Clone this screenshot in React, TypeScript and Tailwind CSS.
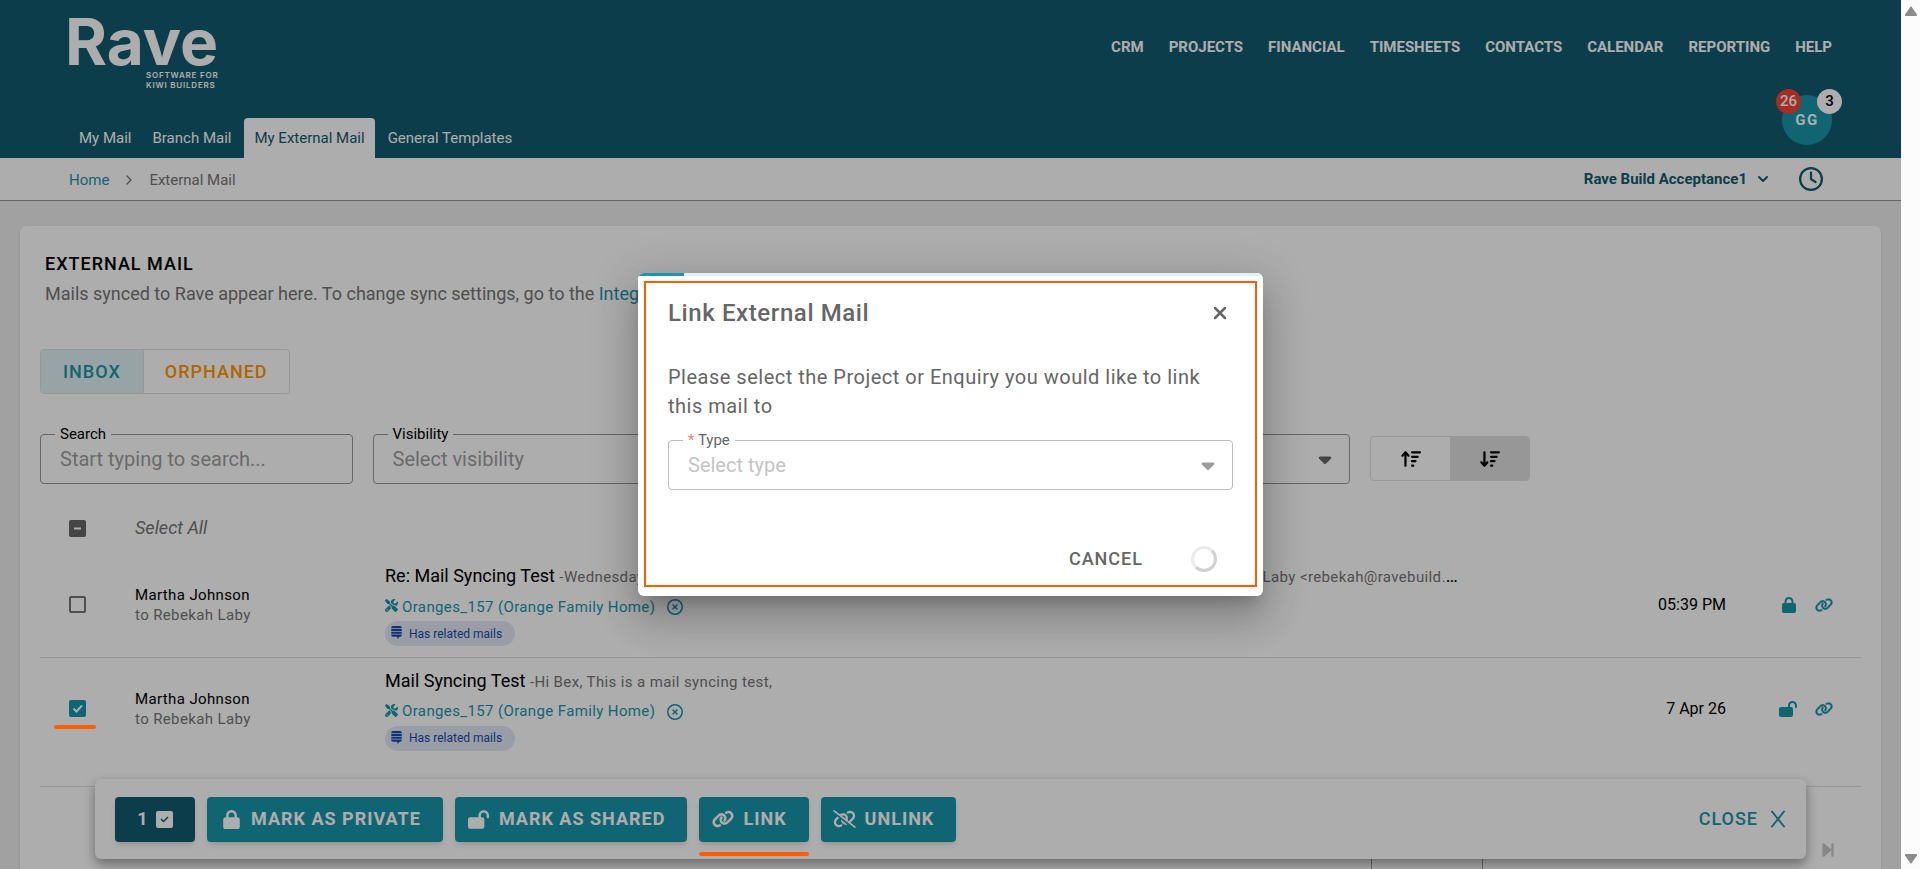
import { useState } from "react";
import type { ReactNode } from "react";
import clsx from "clsx";
import { ChevronDown, ChevronRight, X } from "lucide-react";
import { FaStackExchange } from "react-icons/fa";
import {
  FaArrowDownWideShort,
  FaArrowUpWideShort,
  FaCaretDown,
  FaForwardStep,
  FaLink,
  FaLinkSlash,
  FaLock,
  FaLockOpen,
  FaRegCircleXmark,
  FaRegClock,
  FaScrewdriverWrench,
} from "react-icons/fa6";

interface Mail {
  id: number;
  from: string;
  to: string;
  subject: string;
  preview: string;
  project: string;
  date: string;
  locked: boolean;
}

const MODULES = ["CRM", "PROJECTS", "FINANCIAL", "TIMESHEETS", "CONTACTS", "CALENDAR", "REPORTING", "HELP"];
const TABS = ["My Mail", "Branch Mail", "My External Mail", "General Templates"];

const MAILS: Mail[] = [
  {
    id: 1,
    from: "Martha Johnson",
    to: "to Rebekah Laby",
    subject: "Re: Mail Syncing Test",
    preview: "-Wednesday, 8 April 2026 5:39 PM +1200 from Martha Johnson <martha@ravebuild.com> - Rebekah Laby <rebekah@ravebuild.com> wrote",
    project: "Oranges_157 (Orange Family Home)",
    date: "05:39 PM",
    locked: true,
  },
  {
    id: 2,
    from: "Martha Johnson",
    to: "to Rebekah Laby",
    subject: "Mail Syncing Test",
    preview: "-Hi Bex, This is a mail syncing test,",
    project: "Oranges_157 (Orange Family Home)",
    date: "7 Apr 26",
    locked: false,
  },
];

function Header() {
  return (
    <header className="flex h-[158px] justify-between bg-[#125a6e] pr-[60px] pl-[69px] text-white">
      <div className="flex flex-col justify-between">
        <a href="#" className="-ml-1 flex w-[156px] flex-col pt-[13px]" aria-label="Rave home">
          <span className="font-[Inter] text-[64px] leading-[57px] font-bold">Rave</span>
          <span className="pl-[81px] font-[Inter] text-[8px] leading-[10px] font-semibold tracking-widest whitespace-nowrap">
            SOFTWARE FOR
            <br />
            KIWI BUILDERS
          </span>
        </a>
        <nav className="flex gap-px">
          {TABS.map((tab) => (
            <a
              key={tab}
              href="#"
              className={clsx("flex h-10 items-center rounded-t px-[10px] text-[15px] whitespace-nowrap", tab === "My External Mail" && "mx-[2px] bg-white text-[#125a6e]")}
            >
              {tab}
            </a>
          ))}
        </nav>
      </div>
      <div className="flex flex-col items-end pt-[35px]">
        <nav className="flex gap-[25px] pr-[9px] text-[15px] leading-6 font-bold">
          {MODULES.map((name) => <a key={name} href="#">{name}</a>)}
        </nav>
        <button className="relative mt-9 mr-[9px] flex size-[50px] items-center justify-center rounded-full bg-[#1996a9] text-[15px] font-bold tracking-widest">
          GG
          <span className="absolute -top-[6px] -left-[6px] flex size-[25px] items-center justify-center rounded-full bg-[#f44336] font-medium tracking-normal">26</span>
          <span className="absolute -top-[6px] -right-[10px] flex size-[25px] items-center justify-center rounded-full bg-white font-medium tracking-normal text-black">3</span>
        </button>
      </div>
    </header>
  );
}

function Breadcrumbs() {
  return (
    <div className="flex h-[43px] items-center justify-between border-b border-[#979797] bg-white pr-[78px] pl-[69px]">
      <div className="flex items-center pt-[2px] text-[15px] text-[#757575]">
        <a href="#" className="text-[#1996a9]">Home</a>
        <ChevronRight className="mx-3 size-4" />
        <span>External Mail</span>
      </div>
      <div className="flex items-center text-[#125a6e]">
        <button className="flex items-center gap-2 text-[15px] font-bold">
          Rave Build Acceptance1
          <ChevronDown className="size-4" strokeWidth={3} />
        </button>
        <button className="ml-7" aria-label="Timesheet clock"><FaRegClock className="size-6" /></button>
      </div>
    </div>
  );
}

interface FieldProps {
  id: string;
  label: string;
  children: ReactNode;
  caret?: boolean;
  required?: boolean;
  muted?: boolean;
}

function Field({ id, label, children, caret, required, muted }: FieldProps) {
  return (
    <div className={clsx("relative h-[50px] flex-1 rounded border", muted ? "border-[#bdbdbd]" : "border-[#979797]")}>
      <label htmlFor={id} className={clsx("absolute -top-[11px] left-[14px] bg-white px-[5px] text-[15px] leading-5", muted ? "text-[#666]" : "text-black")}>
        {required && <span className="text-[#f77]">* </span>}
        {label}
      </label>
      {children}
      {caret && <FaCaretDown className={clsx("pointer-events-none absolute top-[14px] right-[14px] size-5", muted ? "text-[#9b9b9b]" : "text-[#666]")} />}
    </div>
  );
}

const selectClass = "h-full w-full appearance-none bg-transparent px-[19px] text-[20px] outline-none";

function Filters() {
  return (
    <div className="mt-10 flex items-start gap-5">
      <div className="flex w-[1310px] gap-5">
        <Field id="search" label="Search">
          <input id="search" placeholder="Start typing to search..." className="h-full w-full bg-transparent px-[19px] text-[20px] outline-none placeholder:text-[#9e9e9e]" />
        </Field>
        <Field id="visibility" label="Visibility" caret>
          <select id="visibility" className={clsx(selectClass, "text-[#9e9e9e]")}><option>Select visibility</option></select>
        </Field>
        <Field id="status" label="Status" caret>
          <select id="status" className={clsx(selectClass, "text-[#9e9e9e]")}><option>Select status</option></select>
        </Field>
        <Field id="sort" label="Sort" caret>
          <select id="sort" className={selectClass}><option>Date</option></select>
        </Field>
      </div>
      <div className="mt-[2px] flex h-[45px] w-40 overflow-hidden rounded border border-[#dfdfdf]">
        <button className="flex flex-1 items-center justify-center" aria-label="Ascending"><FaArrowUpWideShort className="h-[18px] w-5" /></button>
        <button className="flex flex-1 items-center justify-center bg-[#dfdfdf]" aria-label="Descending"><FaArrowDownWideShort className="h-[18px] w-5" /></button>
      </div>
    </div>
  );
}

function CheckBox({ id, state, onChange, label }: { id: string; state: "on" | "off" | "mixed"; onChange?: () => void; label: string }) {
  return (
    <span className="relative flex size-[17px]">
      <input
        id={id}
        type="checkbox"
        aria-label={label}
        checked={state === "on"}
        onChange={onChange ?? (() => undefined)}
        className={clsx("size-full appearance-none rounded-[2px]", state === "off" && "border-2 border-[#757575]", state === "on" && "bg-[#1996a9]", state === "mixed" && "bg-[#666]")}
      />
      {state !== "off" && (
        <svg viewBox="0 0 17 17" className="pointer-events-none absolute inset-0 size-full" fill="none" stroke="#fff" strokeWidth="2">
          <path d={state === "on" ? "M4.500 8.500l3 3 5.500-6" : "M5 8.500h7"} />
        </svg>
      )}
    </span>
  );
}

function MailTable({ selected, onToggle }: { selected: number[]; onToggle: (id: number) => void }) {
  return (
    <table className="mt-[19px] w-full table-fixed text-left text-base">
      <colgroup>
        <col className="w-[95px]" />
        <col className="w-[250px]" />
        <col className="w-[1078px]" />
        <col />
        <col className="w-[135px]" />
      </colgroup>
      <thead>
        <tr className="h-[50px]">
          <th className="pl-[29px]"><CheckBox id="all" state="mixed" label="Select all mails" /></th>
          <th colSpan={4} className="text-lg font-normal text-[#757575] italic"><label htmlFor="all">Select All</label></th>
        </tr>
      </thead>
      <tbody>
        {MAILS.map((mail, index) => (
          <tr key={mail.id} className={clsx("border-b border-[#dfdfdf]", index === 0 ? "h-[104px]" : "h-[129px]")}>
            <td className={clsx("pl-[29px]", index > 0 && "pb-[26px]")}>
              <div className="relative flex">
                <CheckBox id={`mail-${mail.id}`} state={selected.includes(mail.id) ? "on" : "off"} onChange={() => onToggle(mail.id)} label={`Select ${mail.subject}`} />
                {selected.includes(mail.id) && <span className="absolute top-[25px] -left-[15px] z-20 h-1 w-[42px] rounded-full bg-[#ff5e00]" />}
              </div>
            </td>
            <td className={clsx("text-[15px] leading-5 tracking-wide", index > 0 && "pb-[25px]")}>
              <p>{mail.from}</p>
              <p className="text-[#757575]">{mail.to}</p>
            </td>
            <td className={clsx("align-top text-[15px]", index > 0 && "pb-[25px]")}>
              <p className="truncate pt-[11px] text-lg leading-6">
                {mail.subject} <span className="text-[15px] tracking-wide text-[#757575]">{mail.preview}</span>
              </p>
              <div className="mt-1 flex h-7 items-center text-[#1996a9]">
                <FaScrewdriverWrench className="mb-[3px] size-[13px]" />
                <a href="#" className="ml-1 tracking-wide">{mail.project}</a>
                <button className="ml-3" aria-label="Remove project"><FaRegCircleXmark className="size-4" /></button>
              </div>
              <span className="flex h-[25px] w-[130px] items-center gap-[6px] rounded-full bg-[#e0e8f5] pl-[5px] text-xs whitespace-nowrap text-[#1a4ba8]">
                <FaStackExchange className="mb-[2px] size-[13px]" />
                Has related mails
              </span>
            </td>
            <td className={clsx("text-right", index > 0 && "pb-[25px]")}>{mail.date}</td>
            <td className={clsx("text-[#1996a9]", index > 0 && "pb-[25px]")}>
              <div className="flex items-center justify-end gap-[18px] pr-7">
                {mail.locked ? <FaLock className="mr-px h-4 w-[14px]" /> : <FaLockOpen className="h-4 w-[18px]" />}
                <FaLink className="h-4 w-[18px]" strokeWidth={10} />
              </div>
            </td>
          </tr>
        ))}
      </tbody>
    </table>
  );
}

function ActionButton({ icon, children }: { icon: ReactNode; children: ReactNode }) {
  return (
    <button className="flex h-[45px] items-center gap-2 rounded bg-[#1996a9] pr-[22px] pl-3 text-lg font-bold tracking-[1px] whitespace-nowrap text-white shadow-md">
      <span className="flex w-6 justify-center">{icon}</span>
      {children}
    </button>
  );
}

function ActionBar({ count }: { count: number }) {
  return (
    <div className="absolute right-[95px] bottom-[10px] left-[95px] flex h-20 items-center gap-3 rounded-md bg-white px-5 text-lg shadow-[0_5px_12px_rgba(0,0,0,0.4)]">
      <button className="flex h-[45px] w-20 items-center justify-center gap-2 rounded bg-[#125a6e] font-bold text-white shadow-md">
        {count}
        <svg viewBox="0 0 17 17" className="size-[17px]">
          <rect width="17" height="17" rx="2" fill="#fff" />
          <path d="M5 8l2.500 2.500L12 6" fill="none" stroke="#125a6e" strokeWidth="1.500" />
        </svg>
      </button>
      <ActionButton icon={<FaLock className="h-[19px] w-[17px]" />}>MARK AS PRIVATE</ActionButton>
      <ActionButton icon={<FaLockOpen className="h-[19px] w-[21px]" />}>MARK AS SHARED</ActionButton>
      <div className="relative">
        <ActionButton icon={<FaLink className="h-[18px] w-[22px]" strokeWidth={10} />}>LINK</ActionButton>
        <span className="absolute top-[55px] left-0 z-20 h-1 w-full rounded-full bg-[#ff5e00]" />
      </div>
      <ActionButton icon={<FaLinkSlash className="h-[18px] w-[23px]" />}>UNLINK</ActionButton>
      <button className="ml-auto flex items-center gap-3 font-medium tracking-[1px] text-[#1996a9]">
        CLOSE
        <svg viewBox="0 0 16 18" className="h-[18px] w-4" fill="none" stroke="currentColor" strokeWidth="2" strokeLinecap="round" aria-hidden="true">
          <path d="M2 1.500l12 15M14 1.500L2 16.500" />
        </svg>
      </button>
    </div>
  );
}

function LinkDialog() {
  return (
    <div role="dialog" aria-labelledby="dialog-title" className="w-[625px] overflow-hidden rounded-md bg-white text-[#666] shadow-[0_11px_15px_-7px_rgba(0,0,0,0.2),0_24px_38px_3px_rgba(0,0,0,0.14),0_9px_46px_8px_rgba(0,0,0,0.12)]">
      <div className="h-[3px] bg-[#dff2f5]"><div className="h-full w-[46px] bg-[#1996a9]" /></div>
      <div className="mx-[6px] mt-[5px] mb-[9px] border-2 border-[#ff5e00] px-[22px] pb-1">
        <div className="flex items-center justify-between pt-[14px]">
          <h2 id="dialog-title" className="text-2xl leading-8 font-medium tracking-wide">Link External Mail</h2>
          <button aria-label="Close dialog" className="mr-[3px]"><X className="size-5" strokeWidth={3} /></button>
        </div>
        <p className="mt-[34px] text-[20px] leading-[29px] tracking-wide">Please select the Project or Enquiry you would like to link this mail to</p>
        <div className="mt-[19px] flex">
          <Field id="type" label="Type" caret required muted>
            <select id="type" className={clsx(selectClass, "text-[#c4c4c4]")}><option>Select type</option></select>
          </Field>
        </div>
        <div className="mt-[46px] flex h-[45px] items-center justify-end pr-4">
          <button className="text-lg font-medium tracking-[1px]">CANCEL</button>
          <span className="ml-12 size-[26px] rounded-full border-[3px] border-[#ececec] border-r-[#d0d0d0] border-b-[#d0d0d0]" role="status" aria-label="Loading" />
        </div>
      </div>
    </div>
  );
}

export default function App() {
  const [selected, setSelected] = useState<number[]>([2]);

  const toggle = (id: number) => setSelected((prev) => (prev.includes(id) ? prev.filter((x) => x !== id) : [...prev, id]));

  return (
    <div className="flex h-screen overflow-hidden bg-[#fcfcfc] font-[Roboto,sans-serif] text-black">
      <div className="relative min-w-0 flex-1 overflow-hidden bg-[#eee]">
        <Header />
        <Breadcrumbs />
        <main className="mx-5 mt-[25px] rounded-md bg-white px-5 pt-[26px] shadow">
          <div className="px-[5px]">
            <h1 className="text-lg leading-6 font-medium tracking-[1px]">EXTERNAL MAIL</h1>
            <p className="mt-[2px] text-lg leading-8 text-[#757575]">
              Mails synced to Rave appear here. To change sync settings, go to the <a href="#" className="text-[#1996a9]">Integrations</a>
            </p>
          </div>
          <div className="mt-[39px] flex h-[45px] w-fit overflow-hidden rounded border border-[#dfdfdf] text-lg font-medium tracking-[1px]">
            <button className="border-r border-[#dfdfdf] bg-[#e0f0f4] px-[22px] text-[#1996a9]">INBOX</button>
            <button className="px-[21px] text-[#ff9800]">ORPHANED</button>
          </div>
          <Filters />
          <MailTable selected={selected} onToggle={toggle} />
          <div className="flex h-[126px] items-center justify-end gap-4 pr-[26px] text-[#757575]">
            <span className="text-[15px]">Messages per page</span>
            <div className="h-[50px] w-28 border-x border-[#979797]" />
            <button className="ml-[322px] text-[#c8c8c8]" aria-label="Last page"><FaForwardStep className="h-[18px] w-[14px]" /></button>
          </div>
        </main>
        <ActionBar count={selected.length} />
        <div className="absolute inset-0 z-10 flex items-center justify-center bg-black/32">
          <LinkDialog />
        </div>
      </div>
      <div className="flex w-[19px] flex-col items-center justify-between pt-[6px] pb-[5px] text-[#8b8b8b]" aria-hidden="true">
        <svg viewBox="0 0 14 10" className="h-[10px] w-[14px]"><path d="M7 0L13 8.500Q13.500 10 12 10H2Q.5 10 1 8.500Z" fill="currentColor" /></svg>
        <svg viewBox="0 0 14 10" className="h-[10px] w-[14px]"><path d="M7 10L13 1.500Q13.500 0 12 0H2Q.5 0 1 1.500Z" fill="currentColor" /></svg>
      </div>
    </div>
  );
}
